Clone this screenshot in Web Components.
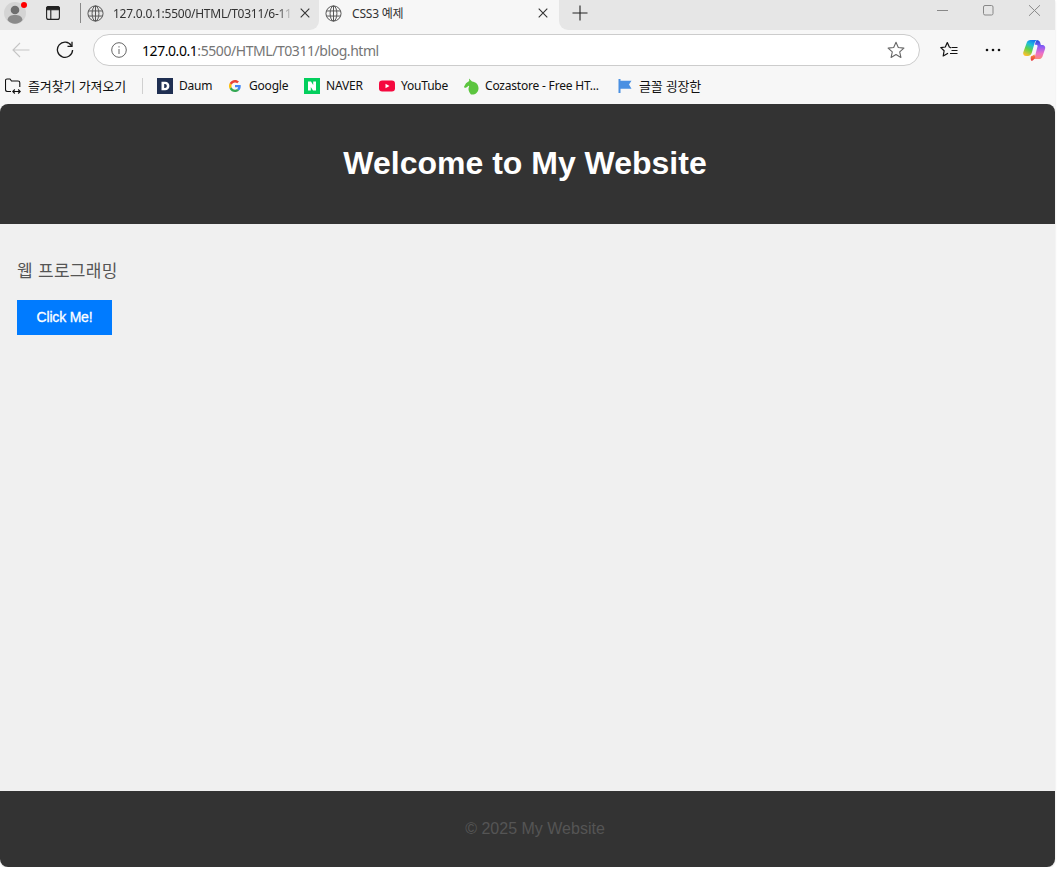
<!DOCTYPE html>
<html lang="ko">
<head>
<meta charset="utf-8">
<title>CSS3 예제</title>
<style>
html,body{margin:0;padding:0;background:#fff}
body{font-family:"Liberation Sans","Noto Sans CJK KR",sans-serif}
</style>
</head>
<body>
<app-window>
  <tab-strip></tab-strip>
  <browser-toolbar></browser-toolbar>
  <bookmarks-bar>
    <bookmark-item label="Daum" w="32" ml="0"><svg width="16" height="16" viewBox="0 0 16 16"><rect width="16" height="16" fill="#1f2f52"/><path d="M4.500 3.700h3.600c2.700 0 4.300 1.700 4.300 4.300s-1.600 4.300-4.300 4.300H4.500zM7.200 6v4h.8c1.200 0 1.800-.8 1.800-2s-.6-2-1.800-2z" fill="#fff" fill-rule="evenodd"/></svg></bookmark-item>
    <bookmark-item label="Google" w="39" ml="16"><svg width="16" height="16" viewBox="-8 -8 64 64"><path fill="#EA4335" d="M24 9.500c3.500 0 6.700 1.300 9.100 3.500l6.800-6.800C35.800 2.400 30.200 0 24 0 14.600 0 6.500 5.400 2.600 13.200l7.900 6.100C12.400 13.600 17.700 9.500 24 9.500z"/><path fill="#4285F4" d="M46.900 24.500c0-1.600-.1-3.100-.4-4.500H24v9h12.900c-.6 3-2.200 5.500-4.700 7.200l7.600 5.900c4.400-4.100 7.100-10.200 7.100-17.600z"/><path fill="#FBBC05" d="M10.500 28.700C10 27.200 9.800 25.700 9.800 24s.3-3.200.7-4.700l-7.900-6.100C1 16.400 0 20.100 0 24s1 7.600 2.600 10.800z"/><path fill="#34A853" d="M24 48c6.500 0 11.900-2.100 15.900-5.900l-7.600-5.900c-2.100 1.400-4.900 2.300-8.200 2.300-6.300 0-11.600-4.100-13.500-9.800l-7.900 6.100C6.500 42.600 14.600 48 24 48z"/></svg></bookmark-item>
    <bookmark-item label="NAVER" w="37" ml="16"><svg width="16" height="16" viewBox="0 0 16 16"><rect width="16" height="16" fill="#03cf5d"/><path d="M4 3.500h3l2.200 3.500V3.500H12v9H9L6.800 9v3.500H4z" fill="#fff"/></svg></bookmark-item>
    <bookmark-item label="YouTube" w="46" ml="16"><svg width="16" height="16" viewBox="0 0 16 16"><rect y="2.500" width="16" height="11" rx="3.200" fill="#f5093f"/><path d="M6.500 5.700 10.500 8l-4 2.300z" fill="#fff"/></svg></bookmark-item>
    <bookmark-item label="Cozastore - Free HT..." w="114" ml="16"><svg width="16" height="17" viewBox="0 0 16 17"><path d="M6 .5 6.200 3 3 5.200 1 8.800l.8 1.200 2-.8 1.700-1.500c.8 0 .8.600.4 1.300-.8 1.800-.5 4.500 2.100 7.500 4 .6 7.200-1.800 7.500-5.700.3-4-2.600-7-6.500-7.300z" fill="#5cc53f"/></svg></bookmark-item>
    <bookmark-item label="글꼴 굉장한" w="62" ml="18" fs="13"><svg width="16" height="16" viewBox="0 0 16 16"><path d="M1.500 1h2v1.800h11l-2.500 3.700 2.500 4.200H3.500v4.300h-2z" fill="#4a90e2"/></svg></bookmark-item>
  </bookmarks-bar>
  <site-header>Welcome to My Website</site-header>
  <site-content>
    <p>웹 프로그래밍</p>
    <action-button>Click Me!</action-button>
  </site-content>
  <site-footer>© 2025 My Website</site-footer>
</app-window>

<script>
const globe = `<svg style="display:block" width="17" height="17" viewBox="0 0 18 18" fill="none" stroke="#555" stroke-width="1.050"><circle cx="9" cy="9" r="8"/><ellipse cx="9" cy="9" rx="3.600" ry="8"/><path d="M1.500 6.300h15M1.500 11.700h15M9 1v16"/></svg>`;
const closeX = `<svg style="display:block" width="10" height="10" viewBox="0 0 10 10" fill="none" stroke="#333" stroke-width="1.100"><path d="M.7.7l8.600 8.600M9.300.7.700 9.300"/></svg>`;

class Base extends HTMLElement {
  html(s){ this.attachShadow({mode:'open'}).innerHTML = s; }
}

customElements.define('app-window', class extends Base {
  constructor(){ super(); this.html(`<style>
    :host{display:flex;flex-direction:column;width:1055px;height:867px;background:#f7f7f7;border-radius:0 0 8px 8px;overflow:hidden;box-shadow:0 1px 2px rgba(0,0,0,.15)}
  </style><slot></slot>`); }
});

customElements.define('tab-strip', class extends Base {
  constructor(){ super(); this.html(`<style>
    :host{display:flex;height:30px;flex:none;background:#f7f7f7;font:12px "Noto Sans","Noto Sans CJK KR",sans-serif;color:#333}
    .left{display:flex;align-items:center;width:319px;height:30px;background:#e6e6e6;border-bottom-right-radius:9px;box-sizing:border-box;padding:0 0 4px 3px;flex:none}
    .avatar{width:22px;height:22px;border-radius:50%;background:#d4d4d4;position:relative;flex:none;margin-left:1px}
    .avatar svg{display:block}
    .dot{position:absolute;top:0;right:-1px;width:6px;height:6px;border-radius:50%;background:#f00}
    .sidebar{margin-left:20px;flex:none;display:block}
    .sep{width:1px;height:20px;background:#888;margin-left:20px;flex:none}
    .globe{margin-left:6px;flex:none;display:block}
    .title{margin-left:9px;width:180px;flex:none;white-space:nowrap;letter-spacing:-.25px;-webkit-mask-image:linear-gradient(90deg,#000 165px,transparent 180px)}
    .x{margin-left:7px;flex:none;display:block}
    .active{display:flex;align-items:center;width:240px;flex:none;box-sizing:border-box;padding:0 0 4px 0}
    .active .title{margin-left:10px;width:170px;-webkit-mask-image:none;letter-spacing:-.2px}
    .active .x{margin-left:16px}
    .right{flex:1;display:flex;align-items:center;background:#e6e6e6;border-bottom-left-radius:9px;padding-bottom:4px}
    .plus{margin-left:13px;display:block;flex:none}
    .win{margin-left:auto;display:flex;align-items:center;gap:35px;padding-right:14px;margin-top:-6px}
    .win svg{display:block}
    .win svg:last-child{margin-left:-1px}
  </style>
  <div class="left">
    <div class="avatar"><svg width="22" height="22" viewBox="0 0 22 22"><circle cx="11" cy="8" r="4.300" fill="#6e6e6e"/><path d="M3.500 18c.6-3.800 3.500-5 7.500-5s6.900 1.200 7.500 5c-2 2.600-4.600 3.800-7.500 3.800S5.500 20.600 3.500 18z" fill="#8a8a8a"/></svg><span class="dot"></span></div>
    <svg class="sidebar" width="14" height="14" viewBox="0 0 14 14" fill="none" stroke="#222" stroke-width="1.100"><rect x=".6" y=".6" width="12.800" height="12.800" rx="2"/><path d="M4.800 3.700v9.700"/><path d="M.6 2.600c0-1.100.9-2 2-2h8.800c1.100 0 2 .9 2 2v1.100H.6z" fill="#222"/></svg>
    <div class="sep"></div>
    <span class="globe">${globe}</span>
    <div class="title">127.0.0.1:5500/HTML/T0311/6-11</div>
    <span class="x">${closeX}</span>
  </div>
  <div class="active">
    <span class="globe">${globe}</span>
    <div class="title">CSS3 예제</div>
    <span class="x">${closeX}</span>
  </div>
  <div class="right">
    <svg class="plus" width="16" height="16" viewBox="0 0 16 16" stroke="#222" stroke-width="1.100"><path d="M8 .5v15M.5 8h15"/></svg>
    <div class="win">
      <svg width="11" height="11" viewBox="0 0 11 11" stroke="#888" stroke-width="1"><path d="M0 5.500h11"/></svg>
      <svg width="11" height="11" viewBox="0 0 11 11" fill="none" stroke="#888" stroke-width="1"><rect x=".5" y=".5" width="9.500" height="9.500" rx="1.500"/></svg>
      <svg width="13" height="11" viewBox="0 0 13 11" fill="none" stroke="#888" stroke-width="1"><path d="M1 .2l11 10.600M12 .2 1 10.800"/></svg>
    </div>
  </div>`); }
});

customElements.define('browser-toolbar', class extends Base {
  constructor(){ super(); this.html(`<style>
    :host{display:flex;align-items:center;height:42px;flex:none;background:#f7f7f7;box-sizing:border-box;padding-bottom:2px}
    svg{display:block;flex:none}
    .back{margin-left:12px}
    .reload{margin-left:26px}
    .addr{margin-left:19px;box-sizing:border-box;width:827px;height:32px;background:#fff;border:1px solid #ccc;border-radius:16px;display:flex;align-items:center;padding-left:17px;padding-right:14px}
    .url{margin-left:15px;font:14px "Noto Sans",sans-serif;letter-spacing:-.44px;color:#757575;white-space:nowrap;flex:1}
    .url b{font-weight:400;color:#000}
    .fav{margin-left:20px}
    .dots{margin-left:27px}
    .cop{margin-left:22px}
  </style>
  <svg class="back" width="18" height="16" viewBox="0 0 18 16" fill="none" stroke="#c5c5c5" stroke-width="1.100"><path d="M17.500 8H1M8 1 1 8l7 7"/></svg>
  <svg class="reload" width="18" height="18" viewBox="0 0 18 18" fill="none" stroke="#1a1a1a" stroke-width="1.300"><path d="M15.500 4.800A7.600 7.600 0 1 0 16.600 9"/><path d="M16 .8v4.500h-4.500"/></svg>
  <div class="addr">
    <svg width="16" height="16" viewBox="0 0 16 16" fill="none" stroke="#666" stroke-width="1"><circle cx="8" cy="8" r="7.300"/><path d="M8 7v5M8 4.200v1.300"/></svg>
    <div class="url"><b>127.0.0.1</b>:5500/HTML/T0311/blog.html</div>
    <svg width="18" height="18" viewBox="0 0 18 18" fill="none" stroke="#666" stroke-width="1.100" stroke-linejoin="round"><path d="M9 1.300l2.300 5.200 5.600.6-4.200 3.700 1.200 5.600L9 13.600l-4.900 2.800 1.200-5.600L1.100 7.100l5.600-.6z"/></svg>
  </div>
  <svg class="fav" width="18" height="18" viewBox="0 0 18 18" fill="none" stroke="#111" stroke-width="1.200" stroke-linejoin="round" stroke-linecap="round"><path d="M10.700 6.700 9.300 6 7.300 1.500 5.300 6 .8 6.600l3.300 3.200-.9 5.200 4.400-2.500"/><path d="M11.500 6.500h6M11.500 9.500h6M10 12.500h7.500" stroke-linecap="butt"/></svg>
  <svg class="dots" width="16" height="4" viewBox="0 0 16 4" fill="#111"><circle cx="2" cy="2" r="1.300"/><circle cx="8" cy="2" r="1.300"/><circle cx="14" cy="2" r="1.300"/></svg>
  <svg class="cop" width="23" height="22" viewBox="0 0 23 22">
    <defs>
      <linearGradient id="c1" x1=".7" y1="0" x2=".3" y2="1"><stop offset="0" stop-color="#1579f0"/><stop offset=".3" stop-color="#1cc0d8"/><stop offset=".6" stop-color="#5fd24a"/><stop offset="1" stop-color="#fbc02d"/></linearGradient>
      <linearGradient id="c2" x1=".5" y1="0" x2=".5" y2="1"><stop offset="0" stop-color="#1d4ed8"/><stop offset=".35" stop-color="#8b5cf6"/><stop offset=".7" stop-color="#ec6fc8"/><stop offset="1" stop-color="#fb8a7a"/></linearGradient>
      <linearGradient id="c3" x1=".5" y1="0" x2=".5" y2="1"><stop offset="0" stop-color="#fb923c"/><stop offset="1" stop-color="#e8333f"/></linearGradient>
    </defs>
    <path d="M7.500 1h6.300c-1.100.7-1.800 1.800-2.200 3L8.800 13.800c-.5 1.800-2 3.200-4 3.200H3C1 17-.3 15.200.3 13.300L3.700 3.700C4.300 2 5.700 1 7.500 1z" fill="url(#c1)"/>
    <path d="M13.800 1c1.600 0 2.900 1 3.400 2.500l.7 2.500h1.500c2 0 3.300 1.900 2.700 3.700l-2.600 7.700c-.6 1.700-2.100 2.600-3.700 2.600H9.800c1.200-.8 1.900-1.900 2.300-3.200l2.400-9.300c.3-1.100-.3-1.800-1.300-1.800h-1.400c.4-1.500 1-3.500 2-4.700z" fill="url(#c2)"/>
    <path d="M8 17.200c1.400-.2 2.600-.9 3.300-2l1 2.800c-.5 1.700-1.700 3.200-3.500 4-1.300-1-1.400-3-.8-4.800z" fill="url(#c3)"/>
  </svg>`); }
});

customElements.define('bookmarks-bar', class extends Base {
  constructor(){ super(); this.html(`<style>
    :host{display:flex;align-items:center;height:32px;flex:none;background:#f7f7f7;box-sizing:border-box;padding:0 0 4px 5px;font:12px "Noto Sans","Noto Sans CJK KR",sans-serif;color:#111}
    svg{display:block;flex:none}
    .imp{margin:0 0 2px 7px;width:98px;flex:none;white-space:nowrap;font-size:13px;letter-spacing:-.1px}
    .sep{width:1px;height:16px;background:#d0d0d0;margin:0 14px 0 16px;flex:none}
  </style>
  <svg width="16" height="16" viewBox="0 0 16 16" fill="none" stroke="#111" stroke-width="1.100"><path d="M6 13.500H2.500a2 2 0 0 1-2-2V2.500a1.500 1.500 0 0 1 1.500-1.500h3l1.500 2h6.500a1.800 1.800 0 0 1 1.800 1.800V9"/><path d="M8 13.500h7M9.800 11.500l-2 2 2 2M13.200 11.500l2 2-2 2"/></svg>
  <span class="imp">즐겨찾기 가져오기</span>
  <span class="sep"></span>
  <slot></slot>`); }
});

customElements.define('bookmark-item', class extends Base {
  constructor(){ super();
    const w=this.getAttribute('w'), ml=this.getAttribute('ml'), label=this.getAttribute('label'), fs=this.getAttribute('fs')||12;
    this.html(`<style>
      :host{display:flex;align-items:center;flex:none;margin-left:${ml}px}
      .t{margin:0 0 2px 6px;width:${w}px;white-space:nowrap;letter-spacing:-.2px;font-size:${fs}px}
      ::slotted(svg){display:block;flex:none}
    </style><slot></slot><span class="t">${label}</span>`); }
});

customElements.define('site-header', class extends Base {
  constructor(){ super(); this.html(`<style>
    :host{display:block;flex:none;height:120px;background:#333;color:#fff;box-sizing:border-box;padding:41px 5px 0 0;text-align:center;border-radius:8px 8px 0 0}
    h1{margin:0;font:700 32px/37px "Liberation Sans",sans-serif}
  </style><h1><slot></slot></h1>`); }
});

customElements.define('site-content', class extends Base {
  constructor(){ super(); this.html(`<style>
    :host{display:block;flex:1;min-height:0;background:#f0f0f0;padding:37px 17px 0;color:#555;font:17px/22px "Liberation Sans","Noto Sans CJK KR",sans-serif;letter-spacing:.3px}
    ::slotted(p){margin:0 0 17px;color:#555}
  </style><slot></slot>`); }
});

customElements.define('action-button', class extends Base {
  constructor(){ super(); this.html(`<style>
    :host{display:block}
    button{display:block;width:95px;height:35px;padding:0 0 1px;border:0;border-radius:0;background:#007bff;color:#fff;font:400 14px "Liberation Sans",sans-serif;letter-spacing:-.2px;-webkit-text-stroke:.3px #fff}
  </style><button><slot></slot></button>`); }
});

customElements.define('site-footer', class extends Base {
  constructor(){ super(); this.html(`<style>
    :host{display:block;flex:none;height:76px;background:#333;color:#555;box-sizing:border-box;padding:28px 0 0 15px;text-align:center;font:16px/20px "Liberation Sans",sans-serif}
  </style><slot></slot>`); }
});
</script>
</body>
</html>
